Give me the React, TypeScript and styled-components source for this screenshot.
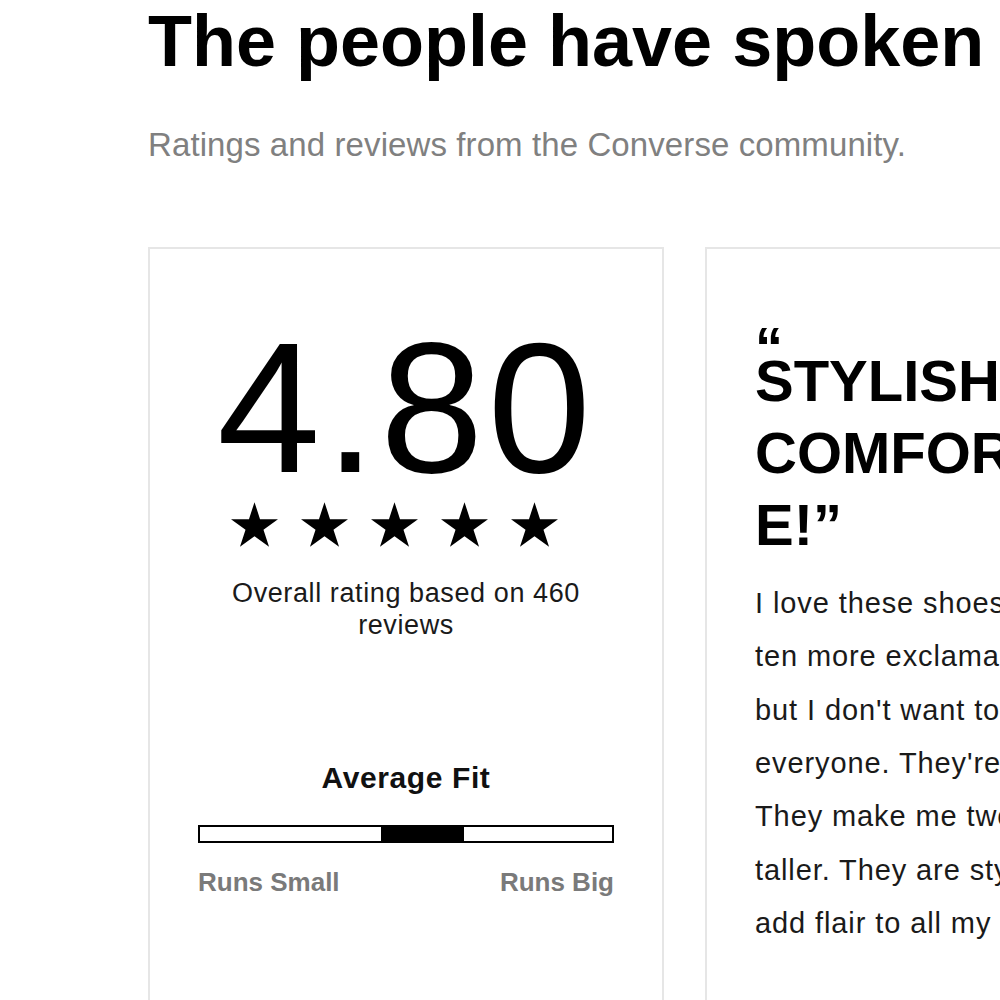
import styled, { createGlobalStyle } from 'styled-components';

const GlobalStyle = createGlobalStyle`
  html, body {
    margin: 0;
    padding: 0;
    background: #fff;
    overflow: hidden;
  }
  body {
    font-family: "Liberation Sans", Arial, sans-serif;
    color: #111;
  }
`;

const starPoints =
  '50,0 61.23,34.55 97.55,34.55 68.17,55.9 79.39,90.45 50,69.1 20.61,90.45 31.83,55.9 2.45,34.55 38.77,34.55';

function Star() {
  return (
    <StarIcon viewBox="2.45 0 95.1 90.45" aria-hidden="true">
      <polygon points={starPoints} fill="#000" />
    </StarIcon>
  );
}

const fit = { start: 44, width: 20 };

const reviewLines = [
  'I love these shoes!!! I would add',
  'ten more exclamation points',
  "but I don't want to scare",
  "everyone. They're so comfy.",
  'They make me two inches',
  'taller. They are stylish and',
  'add flair to all my outfits.',
];

export default function App() {
  return (
    <>
      <GlobalStyle />
      <Page>
        <Title>The people have spoken</Title>
        <Subtitle>Ratings and reviews from the Converse community.</Subtitle>

        <CardRow>
          <RatingCard>
            <Score>4.80</Score>
            <Stars>
              {[0, 1, 2, 3, 4].map((i) => (
                <Star key={i} />
              ))}
            </Stars>
            <Overall>Overall rating based on 460 reviews</Overall>

            <FitTitle>Average Fit</FitTitle>
            <FitBar>
              <FitFill style={{ left: `${fit.start}%`, width: `${fit.width}%` }} />
            </FitBar>
            <FitLabels>
              <span>Runs Small</span>
              <span>Runs Big</span>
            </FitLabels>
          </RatingCard>

          <ReviewCard>
            <QuoteMark>“</QuoteMark>
            <ReviewTitle>STYLISH COMFORTABLE!”</ReviewTitle>
            <ReviewBody>
              {reviewLines.map((line) => (
                <ReviewLine key={line}>{line}</ReviewLine>
              ))}
            </ReviewBody>
          </ReviewCard>
        </CardRow>
      </Page>
    </>
  );
}

const Page = styled.div`
  width: 100vw;
  height: 100vh;
  overflow: hidden;
  box-sizing: border-box;
  padding-left: 148px;
`;

const Title = styled.h1`
  margin: 5px 0 0;
  font-size: 72px;
  line-height: 72px;
  font-weight: 700;
  color: #000;
  white-space: nowrap;
`;

const Subtitle = styled.p`
  margin: 48px 0 0;
  font-size: 33px;
  line-height: 40px;
  font-weight: 400;
  letter-spacing: 0.1px;
  color: #808080;
  white-space: nowrap;
`;

const CardRow = styled.div`
  display: flex;
  gap: 41px;
  margin-top: 82px;
  align-items: flex-start;
`;

const Card = styled.div`
  flex-shrink: 0;
  width: 516px;
  height: 820px;
  box-sizing: border-box;
  border: 2px solid #e6e6e6;
  padding-left: 48px;
  padding-right: 48px;
`;

const RatingCard = styled(Card)`
  display: flex;
  flex-direction: column;
  align-items: center;
  padding-top: 66px;
`;

const Score = styled.div`
  font-size: 186px;
  line-height: 186px;
  font-weight: 400;
  letter-spacing: 4px;
  color: #000;
`;

const Stars = styled.div`
  display: flex;
  gap: 23px;
  margin-top: 1px;
  padding-right: 23px;
`;

const StarIcon = styled.svg`
  width: 47px;
  height: 45px;
  display: block;
`;

const Overall = styled.p`
  margin: 30px 0 0;
  width: 370px;
  text-align: center;
  font-size: 27px;
  line-height: 32px;
  letter-spacing: 0.6px;
  color: #1a1a1a;
`;

const FitTitle = styled.h3`
  margin: 119px 0 0;
  font-size: 30px;
  line-height: 36px;
  font-weight: 700;
  letter-spacing: 0.6px;
  color: #111;
`;

const FitBar = styled.div`
  position: relative;
  margin-top: 29px;
  width: 100%;
  height: 18px;
  box-sizing: border-box;
  border: 2px solid #000;
  background: #fff;
`;

const FitFill = styled.div`
  position: absolute;
  top: 0;
  bottom: 0;
  background: #000;
`;

const FitLabels = styled.div`
  display: flex;
  justify-content: space-between;
  width: 100%;
  margin-top: 23px;
  font-size: 26px;
  line-height: 32px;
  font-weight: 700;
  color: #7a7a7a;
`;

const ReviewCard = styled(Card)`
  padding-top: 88px;
`;

const QuoteMark = styled.div`
  font-size: 56px;
  line-height: 20px;
  height: 20px;
  font-weight: 700;
  margin-bottom: -12px;
  color: #000;
`;

const ReviewTitle = styled.h2`
  margin: 0;
  font-size: 58px;
  line-height: 72px;
  font-weight: 700;
  color: #000;
  overflow-wrap: break-word;
`;

const ReviewBody = styled.p`
  margin: 16px 0 0;
  font-size: 29px;
  line-height: 53.33px;
  letter-spacing: 0.9px;
  color: #1a1a1a;
`;

const ReviewLine = styled.span`
  display: block;
  white-space: nowrap;
`;
